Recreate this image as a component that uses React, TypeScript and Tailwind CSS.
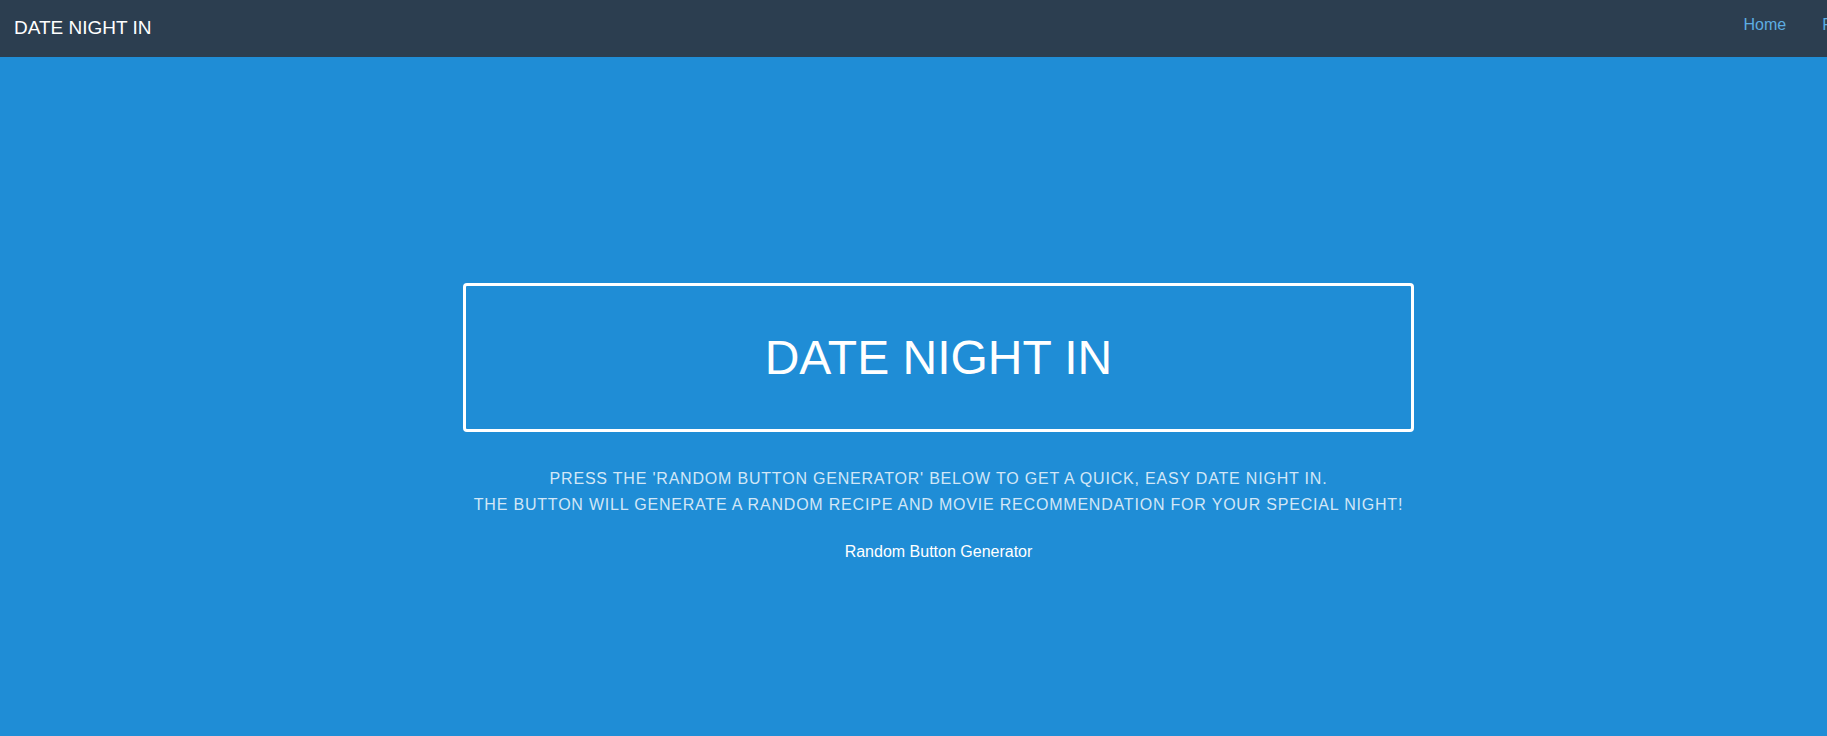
export default function App() {
  return (
    <div
      className="min-h-screen w-full overflow-hidden flex flex-col bg-[#1f8dd6]"
      style={{ fontFamily: '"Liberation Sans", Arial, sans-serif' }}
    >
      {/* Top navbar */}
      <nav className="h-[57px] w-full shrink-0 overflow-hidden bg-[#2c3e50] flex items-center pl-[14px]">
        <span className="text-[19px] leading-none text-white mt-[-3px]">DATE NIGHT IN</span>
        <div className="ml-auto -mr-[53px] flex items-center gap-9 mt-[-8px]">
          <a className="text-base text-[#5dade2]" href="#">Home</a>
          <a className="text-base text-[#5dade2]" href="#">Recipes</a>
        </div>
      </nav>

      {/* Hero */}
      <main className="flex-1 flex flex-col items-center pt-[226px] pl-[50px]">
        <div className="w-[951px] h-[149px] border-[3px] border-white rounded-[4px] flex items-center justify-center">
          <h1 className="text-[48px] leading-none text-white">DATE NIGHT IN</h1>
        </div>

        <div className="mt-[34px] text-center text-base leading-[26px] tracking-[0.8px] uppercase text-[#d2e7f7]">
          <p>PRESS THE 'RANDOM BUTTON GENERATOR' BELOW TO GET A QUICK, EASY DATE NIGHT IN.</p>
          <p>THE BUTTON WILL GENERATE A RANDOM RECIPE AND MOVIE RECOMMENDATION FOR YOUR SPECIAL NIGHT!</p>
        </div>

        <button className="mt-[22px] text-base leading-6 text-white">Random Button Generator</button>
      </main>
    </div>
  );
}
